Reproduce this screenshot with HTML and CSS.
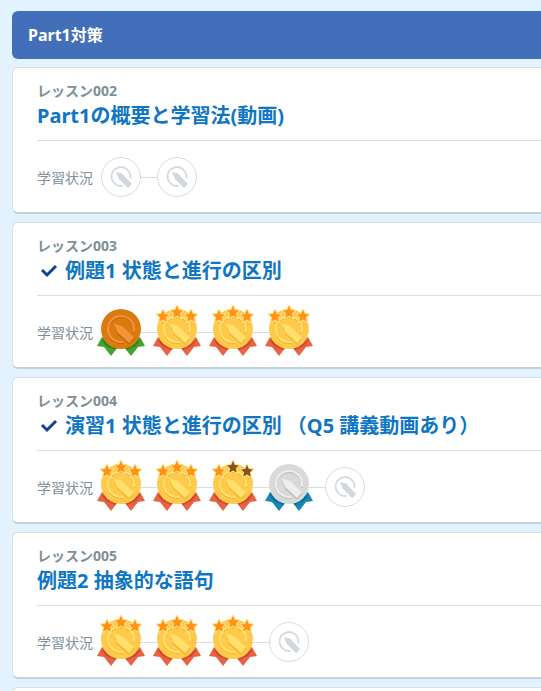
FILE: index.html
```
<!DOCTYPE html>
<html lang="ja">

<head>
  <meta charset="UTF-8">
  <title>Part1対策</title>
  <meta name="viewport" content="width=device-width, initial-scale=1">
  <link rel="stylesheet" href="styles.css">
</head>

<body>
  <!-- shared symbols -->
  <svg class="defs" aria-hidden="true">
    <symbol id="empty" viewBox="0 0 40 40">
      <circle class="e-disc" cx="20" cy="20" r="19.5" />
      <circle class="e-ring" cx="20" cy="19.5" r="9.500" stroke-dasharray="48 60" transform="rotate(80 20 19.500)" />
      <path class="e-pen" d="M15 15l6 1.500L31 27l-3.800 4.200L17.500 21.500z" />
    </symbol>

    <symbol id="medal" viewBox="0 0 48 52">
      <path class="m-ribbon" d="M5 33L0 42l7 1L14 52l7-9zM43 33l5 9-7 1-7 9-7-9z" />
      <path class="m-fold" d="M4 35l5 7 9 4 3-3zM44 35l-5 7-9 4-3-3z" />
      <circle class="m-disc" cx="24" cy="25" r="20" />
      <circle class="m-shadow" cx="24" cy="26" r="13" stroke-dasharray="66 82" transform="rotate(80 24 26)" />
      <circle class="m-ring" cx="24" cy="25" r="13" stroke-dasharray="66 82" transform="rotate(80 24 25)" />
      <path class="m-dark" d="M16.500 20l4 10.500L32 40.500l5.500-6z" />
      <path class="m-pen" d="M16.500 19.500l8.500 2.500 12 11.500-5 5.500-11.500-10.500z" />
    </symbol>

    <symbol id="star" viewBox="0 0 14 14">
      <path class="star-halo" d="M7 1l1.800 3.900 4.200.5-3.100 2.900.8 4.200L7 10.400l-3.700 2.100.8-4.200L1 5.400l4.200-.5z" />
      <path class="star-fill" d="M7 1l1.800 3.900 4.200.5-3.100 2.900.8 4.200L7 10.400l-3.700 2.100.8-4.200L1 5.400l4.200-.5z" />
    </symbol>

    <symbol id="gold" viewBox="0 0 48 52">
      <use href="#medal" width="48" height="52" />
      <use class="star s1" href="#star" x="3" y="5" width="14" height="14" />
      <use class="star s3" href="#star" x="31" y="5" width="14" height="14" />
      <use class="star s2" href="#star" x="17" y="1" width="14" height="14" />
    </symbol>
  </svg>

  <main>
    <h1 class="part">Part1対策</h1>

    <section class="lesson">
      <p class="lesson-no">レッスン002</p>
      <h2><a href="#lesson002">Part1の概要と学習法(動画)</a></h2>
      <div class="status">
        <span>学習状況</span>
        <ul class="steps">
          <li><svg class="empty"><use href="#empty" /></svg></li>
          <li><svg class="empty"><use href="#empty" /></svg></li>
        </ul>
      </div>
    </section>

    <section class="lesson">
      <p class="lesson-no">レッスン003</p>
      <h2>
        <svg class="check" viewBox="0 0 24 24"><path d="M5 11l5 5 9-9" /></svg>
        <a href="#lesson003">例題1 状態と進行の区別</a>
      </h2>
      <div class="status">
        <span>学習状況</span>
        <ul class="steps">
          <li><svg class="medal bronze"><use href="#medal" /></svg></li>
          <li><svg class="medal gold"><use href="#gold" /></svg></li>
          <li><svg class="medal gold"><use href="#gold" /></svg></li>
          <li><svg class="medal gold"><use href="#gold" /></svg></li>
        </ul>
      </div>
    </section>

    <section class="lesson">
      <p class="lesson-no">レッスン004</p>
      <h2>
        <svg class="check" viewBox="0 0 24 24"><path d="M5 11l5 5 9-9" /></svg>
        <a href="#lesson004">演習1 状態と進行の区別 （Q5 講義動画あり）</a>
      </h2>
      <div class="status">
        <span>学習状況</span>
        <ul class="steps">
          <li><svg class="medal gold"><use href="#gold" /></svg></li>
          <li><svg class="medal gold"><use href="#gold" /></svg></li>
          <li><svg class="medal gold one-star"><use href="#gold" /></svg></li>
          <li><svg class="medal silver"><use href="#medal" /></svg></li>
          <li><svg class="empty"><use href="#empty" /></svg></li>
        </ul>
      </div>
    </section>

    <section class="lesson">
      <p class="lesson-no">レッスン005</p>
      <h2><a href="#lesson005">例題2 抽象的な語句</a></h2>
      <div class="status">
        <span>学習状況</span>
        <ul class="steps">
          <li><svg class="medal gold"><use href="#gold" /></svg></li>
          <li><svg class="medal gold"><use href="#gold" /></svg></li>
          <li><svg class="medal gold"><use href="#gold" /></svg></li>
          <li><svg class="empty"><use href="#empty" /></svg></li>
        </ul>
      </div>
    </section>

    <section class="lesson"></section>
  </main>
</body>

</html>
```
FILE: styles.css
```
* {
  box-sizing: border-box;
}

html {
  height: 100%;
  overflow: hidden;
}

body {
  height: 100%;
  margin: 0;
  overflow: hidden;
  background: #e3f2ff;
  color: #7f8f99;
  font-family: "Noto Sans", "Noto Sans CJK JP", sans-serif;
  font-size: 14px;
}

main {
  display: flex;
  flex-direction: column;
  gap: 8px;
  padding: 11px 0 0 12px;
}

h1,
h2,
p,
ul {
  margin: 0;
  padding: 0;
}

.defs {
  position: absolute;
  width: 0;
  height: 0;
}

.part {
  padding: 12px 16px;
  border-radius: 6px 0 0 6px;
  background: #436fba;
  color: #fff;
  font-size: 16px;
  line-height: 24px;
}

.lesson {
  padding: 13px 0 15px 24px;
  border: 1px solid #d8e0e5;
  border-right: 0;
  border-bottom: 2px solid #c4d2d7;
  border-radius: 6px 0 0 6px;
  background: #fff;
}

.lesson-no {
  font-weight: bold;
  line-height: 20px;
}

h2 {
  display: flex;
  align-items: center;
  gap: 4px;
  padding-bottom: 9px;
  border-bottom: 1px solid #d8e0e5;
  font-size: 20px;
  line-height: 30px;
}

h2 a {
  color: #0e76c4;
  text-decoration: none;
  white-space: nowrap;
}

.check {
  width: 24px;
  height: 24px;
  fill: none;
  stroke: #103fa0;
  stroke-width: 3;
}

.status {
  display: flex;
  align-items: center;
  gap: 8px;
  padding-top: 16px;
}

.steps {
  display: flex;
  list-style: none;
}

.steps li {
  display: flex;
  align-items: center;
  height: 40px;
}

/* line between two steps */
.steps li + li::before {
  content: "";
  width: 16px;
  height: 1px;
  background: #d8dde2;
}

.empty {
  width: 40px;
  height: 40px;
}

.e-disc {
  fill: #fff;
  stroke: #d8dbe3;
}

.e-ring {
  fill: none;
  stroke: #d8dbe3;
  stroke-width: 2;
}

.e-pen {
  fill: #d3d7e0;
}

/* the medal is larger than its 40px step */
.medal {
  width: 48px;
  height: 52px;
  margin: -8px -4px -4px;
}

.m-ribbon {
  fill: var(--ribbon);
}

.m-fold {
  fill: var(--fold);
}

.m-disc {
  fill: var(--disc);
}

.m-ring,
.m-shadow {
  fill: none;
  stroke: var(--light);
  stroke-width: 2;
}

.m-shadow {
  stroke: var(--dark);
}

.m-pen {
  fill: var(--light);
}

.m-dark {
  fill: var(--dark);
}

.star-halo {
  fill: #ffe083;
  stroke: #ffe083;
  stroke-width: 2;
}

.star-fill {
  fill: var(--star, #ff9318);
}

.bronze {
  --ribbon: #43a528;
  --fold: #2d8522;
  --disc: #da7b12;
  --light: #f39436;
  --dark: #bc680d;
}

.gold {
  --ribbon: #eb6243;
  --fold: #cf4930;
  --disc: #ffca4b;
  --light: #ffe06c;
  --dark: #f2b431;
}

.silver {
  --ribbon: #1787b5;
  --fold: #08709c;
  --disc: #d9d9d9;
  --light: #eee;
  --dark: #b9b9b9;
}

.one-star {
  --star-off: #85531f;
}

.s2,
.s3 {
  --star: var(--star-off, #ff9318);
}
```
